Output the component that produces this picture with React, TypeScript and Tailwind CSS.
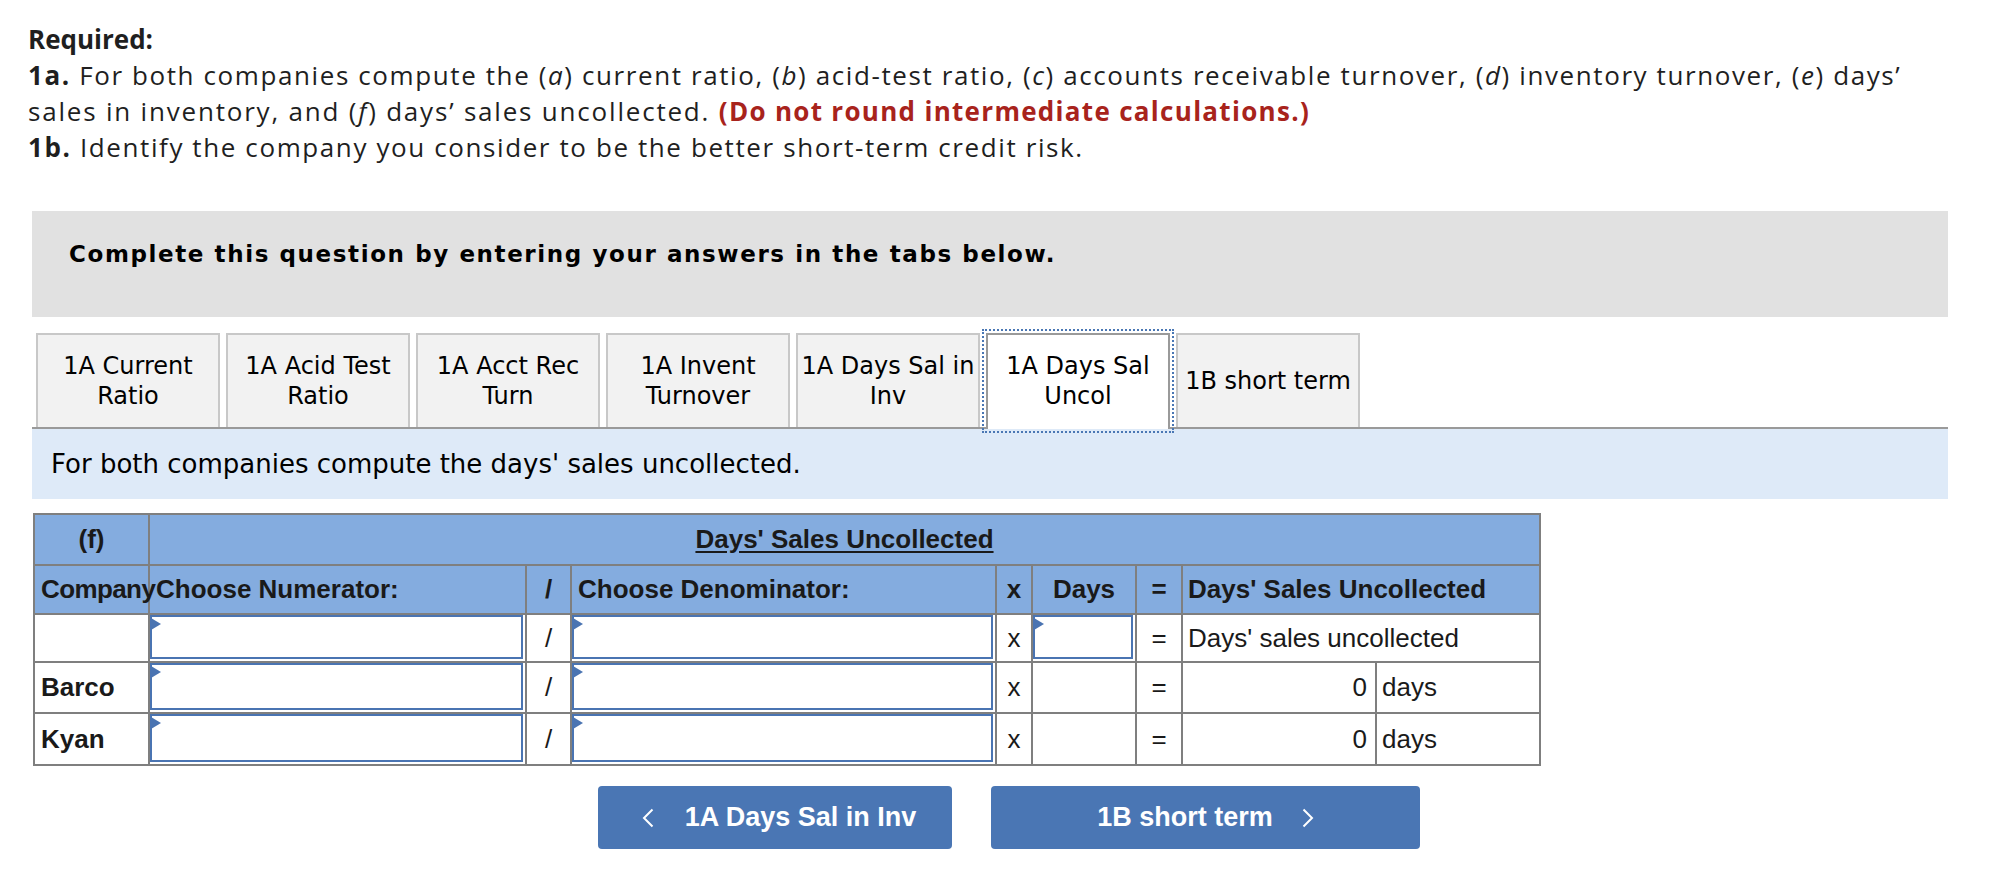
import React from 'react';

const tabs = [
  { label: ['1A Current', 'Ratio'] },
  { label: ['1A Acid Test', 'Ratio'] },
  { label: ['1A Acct Rec', 'Turn'] },
  { label: ['1A Invent', 'Turnover'] },
  { label: ['1A Days Sal in', 'Inv'] },
  { label: ['1A Days Sal', 'Uncol'], active: true },
  { label: ['1B short term'] },
];

const Chevron = ({ dir }: { dir: 'left' | 'right' }) => (
  <svg width="12" height="20" viewBox="0 0 12 20" fill="none">
    <path
      d={dir === 'left' ? 'M10.5 1.5 L2 10 L10.5 18.5' : 'M1.5 1.5 L10 10 L1.5 18.5'}
      stroke="white"
      strokeWidth="2"
    />
  </svg>
);

// blue-bordered answer box with the little marker in its corner
const InputBox = () => (
  <div className="h-full w-full bg-white pr-[2px] pb-[2px]">
    <div className="relative h-full w-full border-2 border-[#4a74b2]">
      <span className="absolute left-[-1px] top-[1px] border-y-[6px] border-y-transparent border-l-[10px] border-l-[#4a74b2]" />
    </div>
  </div>
);

const hd = 'bg-[#84acdf] font-bold flex items-center';
const td = 'bg-white flex items-center';

export default function App() {
  return (
    <div className="w-[2004px] h-[892px] bg-white overflow-hidden text-[#1f1f1f]">
      {/* question text */}
      <div className="pt-[21px] pl-[28px] font-['Open_Sans',sans-serif] text-[26px] leading-[36px] tracking-[1.6px] whitespace-nowrap">
        <div className="font-bold tracking-normal">Required:</div>
        <div>
          <b>1a.</b> For both companies compute the (<i>a</i>) current ratio, (<i>b</i>) acid-test ratio, (<i>c</i>) accounts
          receivable turnover, (<i>d</i>) inventory turnover, (<i>e</i>) days’
        </div>
        <div className="tracking-[1.8px]">
          sales in inventory, and (<i>f</i>) days’ sales uncollected.{' '}
          <b className="text-[#a8231c] tracking-[1.3px]">(Do not round intermediate calculations.)</b>
        </div>
        <div>
          <b>1b.</b> Identify the company you consider to be the better short-term credit risk.
        </div>
      </div>

      <div className="ml-[32px] w-[1916px] font-['DejaVu_Sans',Verdana,sans-serif]">
        <div className="mt-[46px] h-[106px] bg-[#e1e1e1] flex items-center pl-[37px] pb-[20px] text-[23px] tracking-[1.6px] font-bold text-black">
          Complete this question by entering your answers in the tabs below.
        </div>

        {/* tabs */}
        <div className="mt-[16px] flex items-end gap-[6px] pl-[4px] border-b-2 border-[#9a9a9a]">
          {tabs.map((t) => (
            <div
              key={t.label.join(' ')}
              className={
                t.active
                  ? 'relative z-10 -mb-[2px] h-[96px] w-[184px] pb-[2px] border-2 border-b-0 border-[#9a9a9a] bg-white flex flex-col items-center justify-center text-[24px] leading-[30px] text-black outline-2 outline-dotted outline-[#4a77b4] outline-offset-2'
                  : 'h-[94px] w-[184px] border-2 border-b-0 border-[#c8c8c8] bg-[#f2f2f2] flex flex-col items-center justify-center text-[24px] leading-[30px] text-black'
              }
            >
              {t.label.map((l) => (
                <span key={l} className="whitespace-nowrap">{l}</span>
              ))}
            </div>
          ))}
        </div>

        <div className="h-[70px] bg-[#deeaf8] flex items-center pl-[19px] text-[26px] text-black">
          For both companies compute the days' sales uncollected.
        </div>
      </div>

      {/* answer table */}
      <div className="mt-[14px] ml-[33px] grid w-[1508px] grid-cols-[113px_375px_43px_423px_34px_102px_44px_192px_162px] grid-rows-[49px_47px_46px_49px_50px] gap-[2px] p-[2px] bg-[#7f7f7f] font-['Liberation_Sans',Arial,sans-serif] text-[26px] text-[#1a1a1a]">
        <div className={`${hd} justify-center`}>(f)</div>
        <div className={`${hd} col-span-8 justify-center`}>
          <span className="underline underline-offset-[3px]">Days' Sales Uncollected</span>
        </div>

        <div className={`${hd} pl-[6px] relative z-10 whitespace-nowrap tracking-[-0.6px]`}>Company</div>
        <div className={`${hd} pl-[6px]`}>Choose Numerator:</div>
        <div className={`${hd} justify-center`}>/</div>
        <div className={`${hd} pl-[6px]`}>Choose Denominator:</div>
        <div className={`${hd} justify-center`}>x</div>
        <div className={`${hd} justify-center`}>Days</div>
        <div className={`${hd} justify-center`}>=</div>
        <div className={`${hd} col-span-2 pl-[5px]`}>Days' Sales Uncollected</div>

        <div className={td} />
        <InputBox />
        <div className={`${td} justify-center`}>/</div>
        <InputBox />
        <div className={`${td} justify-center`}>x</div>
        <InputBox />
        <div className={`${td} justify-center`}>=</div>
        <div className={`${td} col-span-2 pl-[5px]`}>Days' sales uncollected</div>

        {['Barco', 'Kyan'].map((c) => (
          <React.Fragment key={c}>
            <div className={`${td} pl-[6px] font-bold`}>{c}</div>
            <InputBox />
            <div className={`${td} justify-center`}>/</div>
            <InputBox />
            <div className={`${td} justify-center`}>x</div>
            <div className={td} />
            <div className={`${td} justify-center`}>=</div>
            <div className={`${td} justify-end pr-[8px]`}>0</div>
            <div className={`${td} pl-[5px]`}>days</div>
          </React.Fragment>
        ))}
      </div>

      {/* prev / next */}
      <div className="mt-[20px] ml-[598px] flex gap-[39px] font-['Liberation_Sans',Arial,sans-serif] text-[27px] font-bold text-white">
        <button className="w-[354px] h-[63px] pl-[8px] rounded-[4px] bg-[#4a76b4] flex items-center justify-center gap-[31px]">
          <Chevron dir="left" />
          1A Days Sal in Inv
        </button>
        <button className="w-[429px] h-[63px] rounded-[4px] bg-[#4a76b4] flex items-center justify-center gap-[29px]">
          1B short term
          <Chevron dir="right" />
        </button>
      </div>
    </div>
  );
}
